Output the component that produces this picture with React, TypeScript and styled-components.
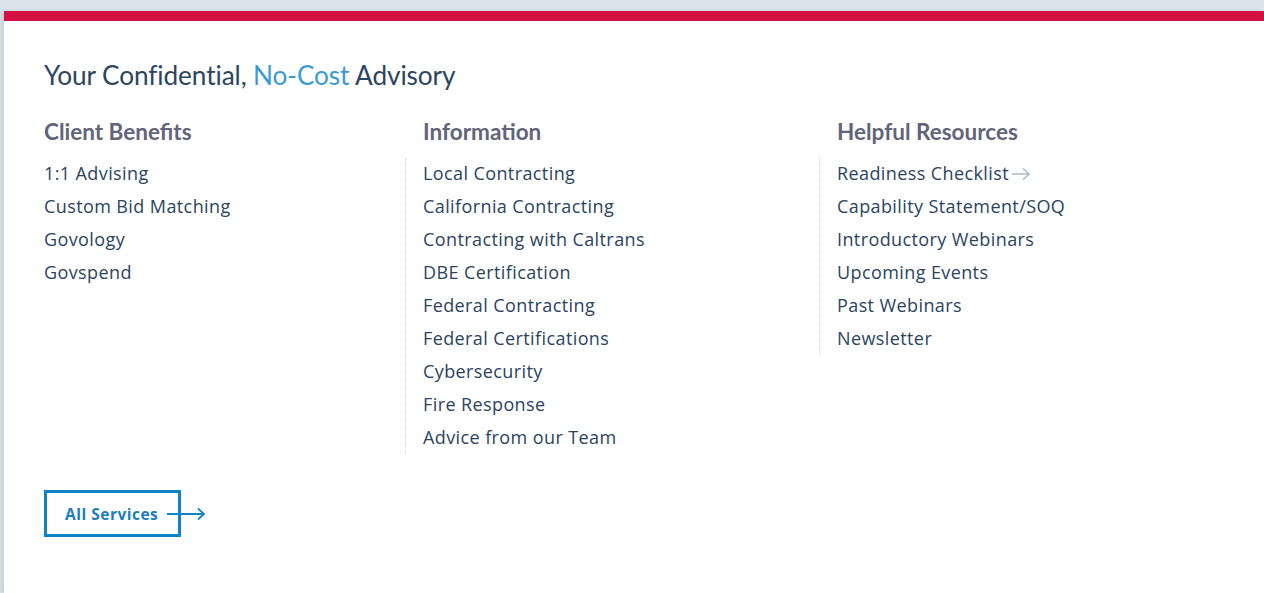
import React from 'react';
import styled, { createGlobalStyle } from 'styled-components';

const GlobalStyle = createGlobalStyle`
  html, body {
    margin: 0;
    padding: 0;
    background: #d9e4ea;
  }
  body {
    font-family: Lato, "Open Sans", sans-serif;
  }
  a {
    text-decoration: none;
    color: inherit;
  }
`;

const Page = styled.div`
  padding: 11px 0 0 4px;
  height: 582px;
  overflow: hidden;
`;

const Panel = styled.section`
  background: #fff;
  border-top: 10px solid #d31143;
  box-shadow: -3px 0 4px rgba(0, 0, 0, 0.08);
  height: 100%;
  padding: 37px 40px 0 40px;
  box-sizing: border-box;
`;

const Title = styled.h2`
  margin: 0 0 25px;
  font-family: Lato, sans-serif;
  font-weight: 400;
  font-size: 26.2px;
  line-height: 34px;
  color: #2c4560;
  letter-spacing: -0.1px;
  span {
    color: #3a9bd4;
  }
`;

const Columns = styled.div`
  display: grid;
  grid-template-columns: 361px 414px 1fr;
`;

const Column = styled.div``;

const Heading = styled.h3<{ $indent: boolean }>`
  margin: 0 0 10px;
  padding-left: ${p => (p.$indent ? '18px' : '0')};
  font-family: Lato, sans-serif;
  font-weight: 700;
  font-size: 22.5px;
  line-height: 30px;
  color: #62647a;
`;

const List = styled.ul<{ $divider: boolean }>`
  list-style: none;
  margin: 0;
  padding: 0 0 0 ${p => (p.$divider ? '17px' : '0')};
  border-left: ${p => (p.$divider ? '1px dotted #c9d8e4' : 'none')};
  li {
    font-family: "Open Sans", sans-serif;
    font-size: 18px;
    letter-spacing: 0.4px;
    line-height: 33px;
    color: #2a4462;
    display: flex;
    align-items: center;
  }
`;

const Arrow = styled.span`
  display: inline-flex;
  margin-left: 2px;
  color: #a9bccd;
`;

const ButtonRow = styled.div`
  margin-top: 36px;
  display: flex;
  align-items: center;
`;

const ServicesButton = styled.a`
  display: inline-flex;
  align-items: center;
  height: 47px;
  width: 137px;
  box-sizing: border-box;
  border: 3px solid #0b84c8;
  padding-left: 18px;
  font-family: "Open Sans", sans-serif;
  font-weight: 700;
  font-size: 15.5px;
  color: #1b7dbd;
  letter-spacing: 0.5px;
  position: relative;
`;

const ButtonArrow = styled.svg`
  position: absolute;
  left: 119px;
  top: 50%;
  transform: translateY(-50%);
`;

const columns = [
  {
    title: 'Client Benefits',
    items: ['1:1 Advising', 'Custom Bid Matching', 'Govology', 'Govspend'],
  },
  {
    title: 'Information',
    items: [
      'Local Contracting',
      'California Contracting',
      'Contracting with Caltrans',
      'DBE Certification',
      'Federal Contracting',
      'Federal Certifications',
      'Cybersecurity',
      'Fire Response',
      'Advice from our Team',
    ],
  },
  {
    title: 'Helpful Resources',
    items: [
      'Readiness Checklist',
      'Capability Statement/SOQ',
      'Introductory Webinars',
      'Upcoming Events',
      'Past Webinars',
      'Newsletter',
    ],
  },
];

export default function App() {
  return (
    <>
      <GlobalStyle />
      <Page>
        <Panel>
          <Title>
            Your Confidential, <span>No-Cost</span> Advisory
          </Title>
          <Columns>
            {columns.map((col, i) => (
              <Column key={col.title}>
                <Heading $indent={i > 0}>{col.title}</Heading>
                <List $divider={i > 0}>
                  {col.items.map((item, j) => (
                    <li key={item}>
                      <a href="#">{item}</a>
                      {i === 2 && j === 0 && (
                        <Arrow>
                          <svg width="20" height="14" viewBox="0 0 20 14" fill="none" stroke="currentColor" strokeWidth="1.6">
                            <path d="M1 7h17M12 1.5L18 7l-6 5.5" />
                          </svg>
                        </Arrow>
                      )}
                    </li>
                  ))}
                </List>
              </Column>
            ))}
          </Columns>
          <ButtonRow>
            <ServicesButton href="#">
              All Services
              <ButtonArrow width="40" height="14" viewBox="0 0 40 14" fill="none" stroke="#0b84c8" strokeWidth="1.8">
                <path d="M1 7h37M32 1.5L38 7l-6 5.5" />
              </ButtonArrow>
            </ServicesButton>
          </ButtonRow>
        </Panel>
      </Page>
    </>
  );
}
